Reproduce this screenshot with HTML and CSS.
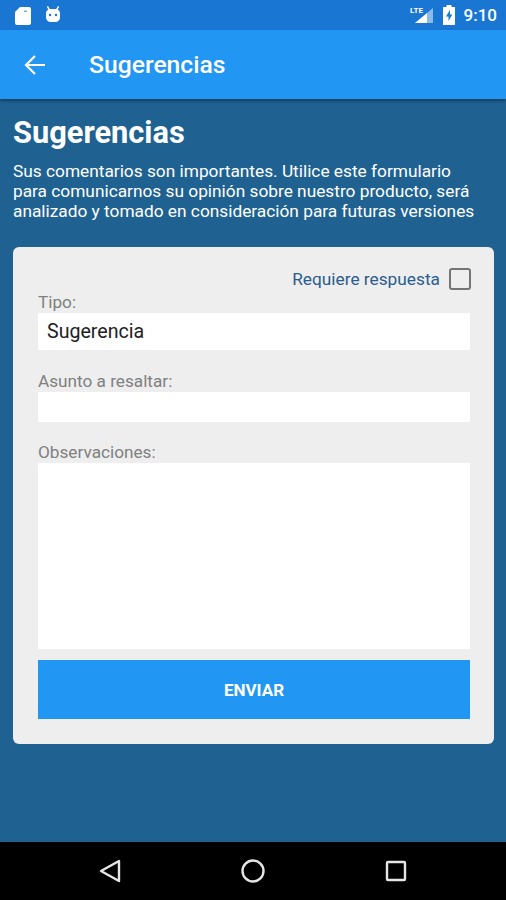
FILE: index.html
```html
<!DOCTYPE html>
<html lang="es">
<head>
    <meta charset="UTF-8" />
    <meta name="viewport" content="width=device-width,initial-scale=1.0" />
    <title>Sugerencias</title>
    <link rel="stylesheet" href="styles.css">
</head>
<body>
    <div class="status-bar">
        <div class="status-left">
            <svg width="18" height="20" viewBox="0 0 18 20"><path fill="#fff" d="M6 2h9a2 2 0 0 1 2 2v14a2 2 0 0 1-2 2H3a2 2 0 0 1-2-2V7z"/><path fill="#1976d2" opacity=".6" d="M10 5.500h3v1.500h-3z"/></svg>
            <svg width="18" height="20" viewBox="0 0 18 20"><path fill="#fff" d="M4 1l1.800 3h6.400L14 1l1.200.7-1.500 2.900c1.500.8 2.300 2.200 2.300 4v3.400c0 3.300-2 5-5 5H7c-3 0-5-1.700-5-5V8.600c0-1.800.8-3.200 2.300-4L2.800 1.700z"/><circle cx="6" cy="10" r="1.200" fill="#1976d2"/><circle cx="12" cy="10" r="1.200" fill="#1976d2"/></svg>
        </div>
        <div class="status-right">
            <svg class="signal" width="24" height="20" viewBox="0 0 24 20">
                <path fill="#fff" opacity=".5" d="M23 3v15H5z"/>
                <path fill="#fff" d="M17 8.300V18H5z"/>
                <text x="0" y="8" class="lte">LTE</text>
            </svg>
            <svg width="14" height="20" viewBox="0 0 14 20"><path fill="#fff" d="M4.500 0h5v2H13v18H1V2h3.500z"/><path fill="#1976d2" d="M8 5L4 11.500h2.500V16l3.800-6.500H8z"/></svg>
            <span class="clock">9:10</span>
        </div>
    </div>

    <div class="app-bar">
        <svg class="back" width="24" height="24" viewBox="0 0 24 24"><path fill="none" stroke="#fff" stroke-width="2.200" d="M22 12H3M12 3l-9 9 9 9"/></svg>
        <div class="app-title">Sugerencias</div>
    </div>

    <div class="content">
        <h1 class="heading">Sugerencias</h1>
        <p class="intro">Sus comentarios son importantes. Utilice este formulario para comunicarnos su opinión sobre nuestro producto, será analizado y tomado en consideración para futuras versiones</p>

        <div class="card">
            <div class="reply-row">
                <span class="reply-label">Requiere respuesta</span>
                <div class="checkbox"></div>
            </div>
            <div class="field-label first">Tipo:</div>
            <div class="input input-type">Sugerencia</div>
            <div class="field-label">Asunto a resaltar:</div>
            <div class="input input-subject"></div>
            <div class="field-label notes">Observaciones:</div>
            <div class="input input-notes"></div>
            <div class="send-btn">ENVIAR</div>
        </div>
    </div>

    <div class="nav-bar">
        <svg width="24" height="26" viewBox="0 0 24 26"><path fill="none" stroke="#e6e6e6" stroke-width="2.400" stroke-linejoin="round" d="M21 3v20L3 13z"/></svg>
        <svg width="26" height="26" viewBox="0 0 26 26"><circle cx="13" cy="13" r="10.500" fill="none" stroke="#e6e6e6" stroke-width="2.400"/></svg>
        <svg width="24" height="24" viewBox="0 0 24 24"><rect x="3" y="3" width="18" height="18" rx="1" fill="none" stroke="#e6e6e6" stroke-width="2.400"/></svg>
    </div>
</body>
</html>
```

FILE: styles.css
```css
* {
    box-sizing: border-box;
}

body {
    display: flex;
    flex-direction: column;
    height: 900px;
    margin: 0;
    background: #1f6291;
    font-family: Roboto, sans-serif;
    overflow: hidden;
}

.status-bar {
    display: flex;
    justify-content: space-between;
    align-items: center;
    height: 30px;
    padding: 0 9px 0 14px;
    background: #1976d2;
    color: #fff;
}

.status-left {
    display: flex;
    gap: 12px;
}

.status-right {
    display: flex;
    align-items: center;
    gap: 8px;
}

.lte {
    font-size: 8px;
    font-weight: 700;
    fill: #fff;
}

.clock {
    font-size: 17px;
    font-weight: 500;
}

.app-bar {
    display: flex;
    align-items: center;
    gap: 42px;
    height: 69px;
    padding-left: 23px;
    background: #2196f3;
    box-shadow: 0 2px 3px rgba(0,0,0,0.35);
}

.app-title {
    color: #fff;
    font-size: 24.7px;
    font-weight: 500;
}

.content {
    flex: 1;
    padding: 0 12px 0 13px;
}

.heading {
    margin: 16px 0 0;
    color: #fff;
    font-size: 30.8px;
    font-weight: 700;
    line-height: 36px;
}

.intro {
    max-width: 468px;
    margin: 10px 0 0;
    color: #fff;
    font-size: 17.3px;
    line-height: 20px;
}

.card {
    margin-top: 26px;
    height: 497px;
    padding: 21px 24px 0 25px;
    background: #eeeeee;
    border-radius: 6px;
}

.reply-row {
    display: flex;
    justify-content: flex-end;
    align-items: center;
    gap: 9px;
    height: 22px;
    margin-right: -1px;
}

.reply-label {
    color: #2a5d8f;
    font-size: 17.3px;
}

.checkbox {
    width: 22px;
    height: 22px;
    border: 2px solid #757575;
    border-radius: 3px;
}

.field-label {
    height: 20px;
    margin-top: 22px;
    color: #808080;
    font-size: 17.2px;
    line-height: 19px;
}

.field-label.first {
    margin-top: 3px;
}

.field-label.notes {
    margin-top: 21px;
}

.input {
    background: #fff;
}

.input-type {
    height: 37px;
    padding-left: 9px;
    color: #212121;
    font-size: 19.6px;
    line-height: 37px;
}

.input-subject {
    height: 30px;
}

.input-notes {
    height: 186px;
}

.send-btn {
    height: 59px;
    margin-top: 11px;
    background: #2196f3;
    color: #fff;
    font-size: 17px;
    font-weight: 700;
    line-height: 61px;
    text-align: center;
}

.nav-bar {
    display: flex;
    justify-content: center;
    align-items: center;
    gap: 118px;
    height: 58px;
    background: #000;
}
```
